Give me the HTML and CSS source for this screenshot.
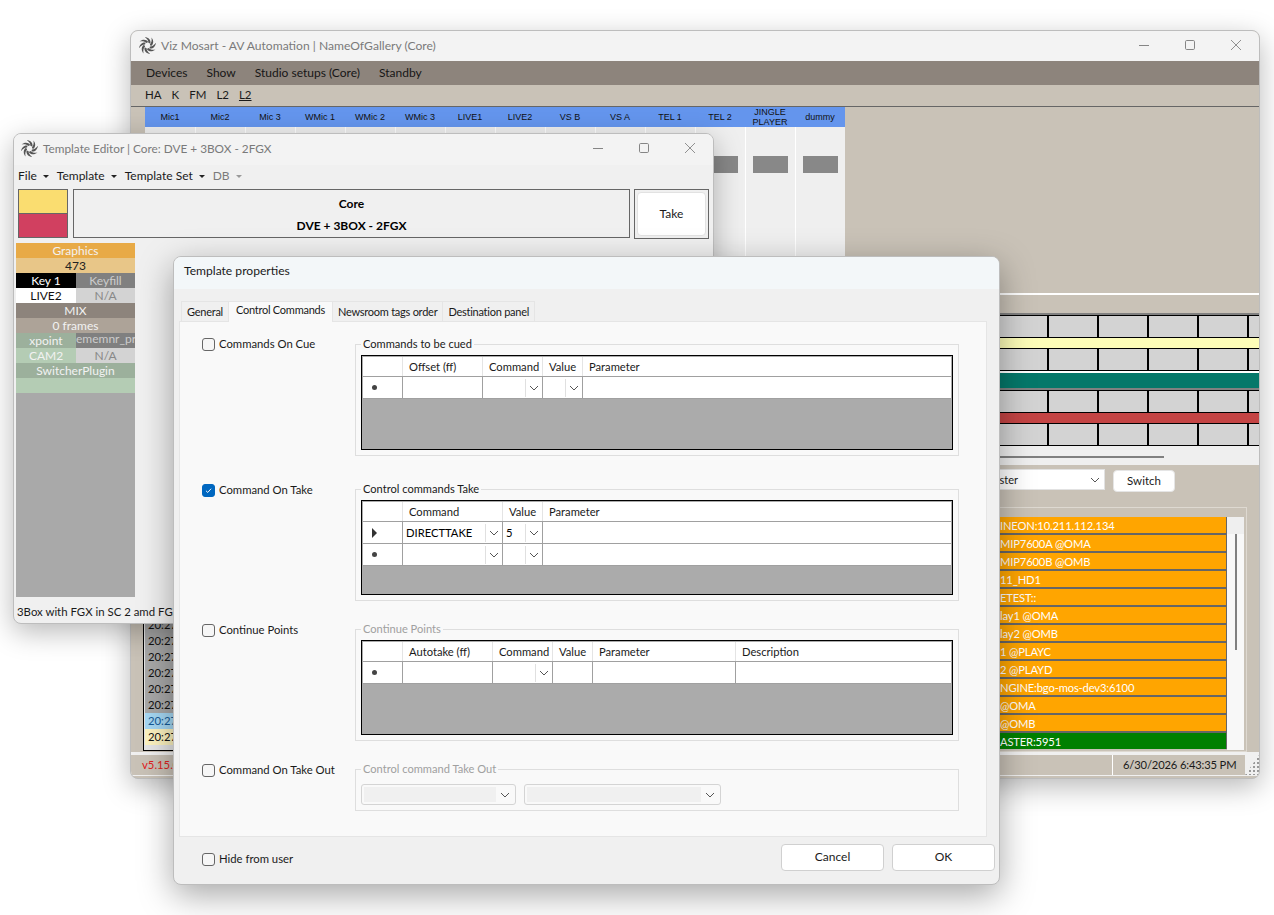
FILE: index.html
```html
<!DOCTYPE html>
<html lang="en">
<head>
  <meta charset="UTF-8">
  <title>Viz Mosart - Template properties</title>
  <link rel="stylesheet" href="styles.css">
</head>
<body>
  <svg class="defs" width="0" height="0">
    <symbol id="logo" viewBox="-8 -8 16 16">
      <path id="b1" d="M0.9 -2.3 C1 -4.3 -0.2 -6.2 -2.6 -7.9 C1 -7.6 3.4 -5 2.8 -1.8 Z"/>
      <use href="#b1" transform="rotate(45)"/>
      <use href="#b1" transform="rotate(90)"/>
      <use href="#b1" transform="rotate(135)"/>
      <use href="#b1" transform="rotate(180)"/>
      <use href="#b1" transform="rotate(225)"/>
      <use href="#b1" transform="rotate(270)"/>
      <use href="#b1" transform="rotate(315)"/>
    </symbol>
    <symbol id="chev" viewBox="0 0 10 6">
      <path d="M1 1 L5 5 L9 1" fill="none" stroke="currentColor" stroke-width="1"/>
    </symbol>
    <symbol id="tick" viewBox="0 0 13 13">
      <path d="M3.5 6.8 L5.6 8.8 L9.6 4.4" fill="none" stroke="#fff" stroke-width="1.1"/>
    </symbol>
    <symbol id="w-min" viewBox="0 0 10 10"><path d="M0 5.5 H10" stroke="currentColor" fill="none"/></symbol>
    <symbol id="w-max" viewBox="0 0 10 10"><rect x="0.5" y="0.5" width="9" height="9" rx="1.2" stroke="currentColor" fill="none"/></symbol>
    <symbol id="w-close" viewBox="0 0 10 10"><path d="M0 0 L10 10 M10 0 L0 10" stroke="currentColor" stroke-width="0.9" fill="none"/></symbol>
  </svg>

  <!-- main window -->
  <div class="window main-win">
    <div class="titlebar">
      <svg class="logo"><use href="#logo"/></svg>
      <span class="title">Viz Mosart - AV Automation | NameOfGallery (Core)</span>
      <div class="win-btns">
        <svg><use href="#w-min"/></svg>
        <svg><use href="#w-max"/></svg>
        <svg><use href="#w-close"/></svg>
      </div>
    </div>
    <div class="menubar">
      <span>Devices</span><span>Show</span><span>Studio setups (Core)</span><span>Standby</span>
    </div>
    <div class="toolbar">
      <span>HA</span><span>K</span><span>FM</span><span>L2</span><span class="under">L2</span>
    </div>
    <div class="work">
      <div class="mixer">
        <div class="chan"><div class="chan-head">Mic1</div><div class="fader"></div></div>
        <div class="chan"><div class="chan-head">Mic2</div><div class="fader"></div></div>
        <div class="chan"><div class="chan-head">Mic 3</div><div class="fader"></div></div>
        <div class="chan"><div class="chan-head">WMic 1</div><div class="fader"></div></div>
        <div class="chan"><div class="chan-head">WMic 2</div><div class="fader"></div></div>
        <div class="chan"><div class="chan-head">WMic 3</div><div class="fader"></div></div>
        <div class="chan"><div class="chan-head">LIVE1</div><div class="fader"></div></div>
        <div class="chan"><div class="chan-head">LIVE2</div><div class="fader"></div></div>
        <div class="chan"><div class="chan-head">VS B</div><div class="fader"></div></div>
        <div class="chan"><div class="chan-head">VS A</div><div class="fader"></div></div>
        <div class="chan"><div class="chan-head">TEL 1</div><div class="fader"></div></div>
        <div class="chan"><div class="chan-head">TEL 2</div><div class="fader"></div></div>
        <div class="chan"><div class="chan-head">JINGLE PLAYER</div><div class="fader"></div></div>
        <div class="chan"><div class="chan-head">dummy</div><div class="fader"></div></div>
      </div>
      <div class="white-rule"></div>
      <div class="lower">
        <div class="log-col">
          <div class="log">
            <div class="log-row">20:27</div>
            <div class="log-row">20:27</div>
            <div class="log-row">20:27</div>
            <div class="log-row">20:27</div>
            <div class="log-row">20:27</div>
            <div class="log-row">20:27</div>
            <div class="log-row log-blue">20:27</div>
            <div class="log-row log-yellow">20:27</div>
          </div>
        </div>
        <div class="right-col">
          <div class="strip-rule"></div>
          <div class="cells"></div>
          <div class="bar bar-yellow"></div>
          <div class="cells"></div>
          <div class="gap-white"></div>
          <div class="bar-teal"></div>
          <div class="strip-rule"></div>
          <div class="cells"></div>
          <div class="bar bar-red"></div>
          <div class="cells"></div>
          <div class="h-scroll"><div class="h-thumb"></div></div>
          <div class="switcher">
            <div class="select-box"><span>Master</span><svg class="chev"><use href="#chev"/></svg></div>
            <button class="btn switch-btn">Switch</button>
          </div>
          <div class="device-group">
            <div class="devices">
              <div class="dev">INEON:10.211.112.134</div>
              <div class="dev">MIP7600A @OMA</div>
              <div class="dev">MIP7600B @OMB</div>
              <div class="dev">11_HD1</div>
              <div class="dev">ETEST::</div>
              <div class="dev">lay1 @OMA</div>
              <div class="dev">lay2 @OMB</div>
              <div class="dev">1 @PLAYC</div>
              <div class="dev">2 @PLAYD</div>
              <div class="dev">NGINE:bgo-mos-dev3:6100</div>
              <div class="dev">@OMA</div>
              <div class="dev">@OMB</div>
              <div class="dev dev-ok">ASTER:5951</div>
            </div>
            <div class="v-scroll"><div class="v-thumb"></div></div>
          </div>
        </div>
      </div>
    </div>
    <div class="status">
      <div class="status-left">v5.15.0</div>
      <div class="status-date">6/30/2026 6:43:35 PM</div>
      <div class="grip"></div>
    </div>
  </div>

  <!-- template editor -->
  <div class="window editor-win">
    <div class="titlebar">
      <svg class="logo"><use href="#logo"/></svg>
      <span class="title">Template Editor | Core: DVE + 3BOX - 2FGX</span>
      <div class="win-btns">
        <svg><use href="#w-min"/></svg>
        <svg><use href="#w-max"/></svg>
        <svg><use href="#w-close"/></svg>
      </div>
    </div>
    <div class="ed-menu">
      <span>File<i class="caret"></i></span>
      <span>Template<i class="caret"></i></span>
      <span>Template Set<i class="caret"></i></span>
      <span class="off">DB<i class="caret"></i></span>
    </div>
    <div class="ed-top">
      <div class="swatches"><div class="sw-yellow"></div><div class="sw-red"></div></div>
      <div class="core-box"><div>Core</div><div>DVE + 3BOX - 2FGX</div></div>
      <div class="take-box"><button class="btn take-btn">Take</button></div>
    </div>
    <div class="ed-body">
      <div class="tpl-panel">
        <div class="tr t-gfx">Graphics</div>
        <div class="tr t-num">473</div>
        <div class="tr split"><div class="t-black">Key 1</div><div class="t-grey">Keyfill</div></div>
        <div class="tr split"><div class="t-white">LIVE2</div><div class="t-na">N/A</div></div>
        <div class="tr t-mix">MIX</div>
        <div class="tr t-frames">0 frames</div>
        <div class="tr split"><div class="t-green">xpoint</div><div class="t-grey t-clip">ememnr_pr</div></div>
        <div class="tr split"><div class="t-green2">CAM2</div><div class="t-na">N/A</div></div>
        <div class="tr t-green">SwitcherPlugin</div>
        <div class="tr t-green2"></div>
      </div>
    </div>
    <div class="ed-caption">3Box with FGX in SC 2 amd FGX</div>
  </div>

  <!-- template properties dialog -->
  <div class="window dialog">
    <div class="dlg-title">Template properties</div>
    <div class="dlg-body">
      <div class="tabs">
        <div class="tab">General</div>
        <div class="tab tab-on">Control Commands</div>
        <div class="tab">Newsroom tags order</div>
        <div class="tab">Destination panel</div>
      </div>
      <div class="tab-panel">

        <div class="section s1">
          <label class="check"><span class="box"></span>Commands On Cue</label>
          <fieldset class="group">
            <legend>Commands to be cued</legend>
            <div class="grid g-cue">
              <div class="row row-head">
                <div class="c"></div><div class="c">Offset (ff)</div><div class="c">Command</div><div class="c">Value</div><div class="c">Parameter</div>
              </div>
              <div class="row">
                <div class="c rh"><i class="dot"></i></div><div class="c"></div>
                <div class="c combo"><svg class="chev"><use href="#chev"/></svg></div>
                <div class="c combo"><svg class="chev"><use href="#chev"/></svg></div>
                <div class="c"></div>
              </div>
            </div>
          </fieldset>
        </div>

        <div class="section s2">
          <label class="check"><span class="box box-on"><svg><use href="#tick"/></svg></span>Command On Take</label>
          <fieldset class="group">
            <legend>Control commands Take</legend>
            <div class="grid g-take">
              <div class="row row-head">
                <div class="c"></div><div class="c">Command</div><div class="c">Value</div><div class="c">Parameter</div>
              </div>
              <div class="row">
                <div class="c rh"><i class="arrow"></i></div>
                <div class="c combo"><span>DIRECTTAKE</span><svg class="chev"><use href="#chev"/></svg></div>
                <div class="c combo"><span>5</span><svg class="chev"><use href="#chev"/></svg></div>
                <div class="c"></div>
              </div>
              <div class="row">
                <div class="c rh"><i class="dot"></i></div>
                <div class="c combo"><svg class="chev"><use href="#chev"/></svg></div>
                <div class="c combo"><svg class="chev"><use href="#chev"/></svg></div>
                <div class="c"></div>
              </div>
            </div>
          </fieldset>
        </div>

        <div class="section s3">
          <label class="check"><span class="box"></span>Continue Points</label>
          <fieldset class="group group-off">
            <legend>Continue Points</legend>
            <div class="grid g-cont">
              <div class="row row-head">
                <div class="c"></div><div class="c">Autotake (ff)</div><div class="c">Command</div><div class="c">Value</div><div class="c">Parameter</div><div class="c">Description</div>
              </div>
              <div class="row">
                <div class="c rh"><i class="dot"></i></div><div class="c"></div>
                <div class="c combo"><svg class="chev"><use href="#chev"/></svg></div>
                <div class="c"></div><div class="c"></div><div class="c"></div>
              </div>
            </div>
          </fieldset>
        </div>

        <div class="section s4">
          <label class="check"><span class="box"></span>Command On Take Out</label>
          <fieldset class="group group-off group-out">
            <legend>Control command Take Out</legend>
            <div class="out-row">
              <div class="out-select out-a"><span></span><svg class="chev"><use href="#chev"/></svg></div>
              <div class="out-select out-b"><span></span><svg class="chev"><use href="#chev"/></svg></div>
            </div>
          </fieldset>
        </div>
      </div>
      <div class="dlg-foot">
        <label class="check"><span class="box"></span>Hide from user</label>
        <div class="foot-btns">
          <button class="btn foot-btn">Cancel</button>
          <button class="btn foot-btn">OK</button>
        </div>
      </div>
    </div>
  </div>
</body>
</html>
```

FILE: styles.css
```css
* {
  box-sizing: border-box;
}

html, body {
  margin: 0;
  padding: 0;
  height: 915px;
  overflow: hidden;
}

body {
  background-color: #fff;
  font-family: Lato, Roboto, sans-serif;
  font-size: 12px;
  color: #1a1a1a;
  position: relative;
}

.defs {
  position: absolute;
}

.window {
  position: absolute;
  display: flex;
  flex-direction: column;
  border: 1px solid #bdbdbd;
  border-radius: 8px;
  overflow: hidden;
  background-color: #f0f0f0;
  box-shadow: 0 8px 28px rgba(0, 0, 0, 0.28);
}

.main-win {
  left: 130px;
  top: 30px;
  width: 1130px;
  height: 749px;
  background-color: #c9c2b7;
}

.editor-win {
  left: 13px;
  top: 133px;
  width: 701px;
  height: 491px;
}

.dialog {
  left: 173px;
  top: 256px;
  width: 827px;
  height: 629px;
  box-shadow: 0 10px 34px rgba(0, 0, 0, 0.35);
}

/* title bars */
.titlebar {
  flex: none;
  height: 30px;
  display: flex;
  align-items: center;
  padding: 0 0 2px 8px;
  background-color: #f3f3f3;
}

.editor-win .titlebar {
  height: 31px;
  padding: 0 0 3px 7px;
}

.logo {
  width: 17px;
  height: 17px;
  fill: #555;
  margin-right: 5px;
}

.title {
  color: #7a7a7a;
  font-size: 12.1px;
}

.editor-win .title {
  font-size: 11.8px;
}

.win-btns {
  margin-left: auto;
  display: flex;
  align-items: center;
  gap: 36px;
  padding-right: 18px;
  color: #858585;
}

.win-btns svg {
  width: 10px;
  height: 10px;
}

/* main window */
.menubar {
  flex: none;
  height: 24px;
  display: flex;
  align-items: center;
  gap: 19px;
  padding: 0 0 2px 15px;
  background-color: #8d847c;
  color: #161616;
}

.toolbar {
  flex: none;
  height: 21px;
  display: flex;
  align-items: center;
  gap: 10px;
  padding: 0 0 3px 14px;
  font-size: 11.5px;
}

.under {
  text-decoration: underline;
}

.work {
  flex: none;
  height: 646px;
  border-top: 1px solid #666;
}

.mixer {
  height: 186px;
  margin-left: 14px;
  width: 700px;
  display: flex;
}

.chan {
  width: 50px;
  background-color: #efefef;
}

.chan + .chan {
  border-left: 1px solid #fff;
}

.chan + .chan .chan-head {
  margin-left: -1px;
}

.chan-head {
  height: 20px;
  display: flex;
  align-items: center;
  justify-content: center;
  text-align: center;
  padding: 0 6px;
  background-color: #6495ed;
  font-family: "Liberation Sans", Arial, sans-serif;
  font-size: 9px;
  line-height: 10px;
  color: #111;
}

.fader {
  height: 17px;
  margin: 29px 7px 0;
  background-color: #888;
}

.white-rule {
  height: 2px;
  background-color: #fff;
}

.lower {
  display: flex;
  padding-top: 18px;
}

.log-col {
  width: 714px;
  padding-left: 12px;
}

.log {
  height: 439px;
  margin-top: -1px;
  display: flex;
  flex-direction: column;
  justify-content: flex-end;
  padding: 0 0 5px 1px;
  border: 1px solid #000;
  background-color: #e6e6e6;
}

.log-row {
  height: 16px;
  line-height: 16px;
  padding-left: 3px;
  background-color: #a8a8a8;
  color: #111;
  font-size: 11.3px;
}

.log-blue {
  background-color: #a6d8f4;
  color: #155a96;
}

.log-yellow {
  background-color: #fdf3c0;
}

.right-col {
  width: 414px;
}

.strip-rule {
  height: 2px;
  background-color: #808080;
}

.cells {
  height: 23px;
  border-top: 1px solid #000;
  border-bottom: 1px solid #000;
  background-image: linear-gradient(90deg, #d3d3d3 48px, #000 48px);
  background-size: 50px 100%;
  background-position: -46px 0;
}

.bar {
  height: 10px;
}

.bar-yellow {
  background-color: #fdfdb8;
}

.bar-red {
  background-color: #c44444;
}

.gap-white {
  height: 2px;
  background-color: #fff;
}

.bar-teal {
  height: 15px;
  background-color: #05786a;
}

.h-scroll {
  height: 19px;
  padding-top: 10px;
  background-color: #efefef;
}

.h-thumb {
  width: 319px;
  height: 2px;
  background-color: #808080;
}

.switcher {
  display: flex;
  align-items: flex-start;
  gap: 8px;
  margin-top: 4px;
  margin-left: 130px;
  height: 38px;
}

.select-box {
  width: 130px;
  height: 21px;
  display: flex;
  align-items: center;
  justify-content: space-between;
  padding: 0 4px 0 8px;
  background-color: #fff;
  border: 1px solid #e2e2e2;
  font-size: 11px;
}

.chev {
  width: 10px;
  height: 6px;
  flex: none;
  color: #555;
}

.btn {
  font-family: Lato, Roboto, sans-serif;
  font-size: 12px;
  color: #1a1a1a;
  background-color: #fff;
  border: 1px solid #d0d0d0;
  border-radius: 4px;
  padding: 0 0 2px;
}

.switch-btn {
  width: 62px;
  height: 22px;
  margin-top: 1px;
  border-color: #e5e5e5;
  font-size: 11.5px;
}

.device-group {
  margin: 0 12px 0 5px;
  height: 245px;
  padding: 9px 2px 1px 0;
  display: flex;
  border: 1px solid #ded9d1;
}

.devices {
  flex: 1;
  overflow: hidden;
}

.dev {
  height: 18px;
  line-height: 17px;
  padding-left: 149px;
  background-color: #ffa500;
  border-bottom: 2px solid #666;
  border-right: 1px solid #666;
  color: #fff;
  font-size: 11.2px;
  letter-spacing: -0.15px;
  white-space: nowrap;
}

.dev-ok {
  height: 16px;
  border-bottom: none;
  background-color: #008000;
}

.v-scroll {
  width: 17px;
  padding: 17px 0 0 8px;
  background: linear-gradient(#efefef 17px, #f8f8f8 17px);
}

.v-thumb {
  width: 2px;
  height: 116px;
  background-color: #808080;
}

.status {
  flex: none;
  height: 24px;
  padding: 3px 0 1px;
  display: flex;
  background-color: #f0f0f0;
}

.status-left {
  width: 982px;
  padding-left: 11px;
  line-height: 19px;
  color: #e02020;
  background-color: #c9c2b7;
  border-right: 1px solid #fff;
  font-size: 11.3px;
}

.status-date {
  width: 132px;
  padding-left: 10px;
  line-height: 19px;
  background-color: #c9c2b7;
  white-space: nowrap;
  font-size: 11.2px;
  letter-spacing: -0.15px;
}

.grip {
  flex: 1;
  background-image: radial-gradient(#999 1px, transparent 1px);
  background-size: 4px 4px;
  background-position: 3px 6px;
  clip-path: polygon(100% 0, 100% 100%, 0 100%);
}

/* template editor */
.ed-menu {
  flex: none;
  height: 23px;
  display: flex;
  align-items: center;
  gap: 8px;
  padding: 0 0 3px 4px;
}

.ed-menu .off {
  color: #7b7b7b;
}

.caret {
  display: inline-block;
  margin-left: 6px;
  vertical-align: 2px;
  border-left: 3px solid transparent;
  border-right: 3px solid transparent;
  border-top: 3px solid #222;
}

.off .caret {
  border-top-color: #999;
}

.ed-top {
  flex: none;
  height: 50px;
  display: flex;
  padding-left: 4px;
  margin-top: 1px;
}

.swatches {
  width: 50px;
  height: 49px;
  display: flex;
  flex-direction: column;
  gap: 1px;
  border: 1px solid #666;
  background-color: #666;
}

.sw-yellow {
  flex: 1;
  background-color: #fadd70;
}

.sw-red {
  flex: 1;
  background-color: #d14060;
}

.core-box {
  width: 557px;
  height: 49px;
  margin-left: 5px;
  display: flex;
  flex-direction: column;
  align-items: center;
  justify-content: space-around;
  padding: 2px 0 1px;
  border: 1px solid #666;
  font-size: 12px;
  font-weight: 700;
  color: #000;
}

.take-box {
  width: 75px;
  height: 50px;
  margin-left: 4px;
  padding: 2px;
  border: 1px solid #666;
}

.take-btn {
  width: 100%;
  height: 100%;
  border-color: #e2e2e2;
}

.ed-body {
  flex: none;
  padding: 4px 0 0 2px;
}

.tpl-panel {
  width: 119px;
  height: 354px;
  background-color: #a9a9a9;
}

.tr {
  height: 15px;
  line-height: 16px;
  text-align: center;
  color: #f2f2f2;
  overflow: hidden;
  white-space: nowrap;
}

.split {
  display: flex;
}

.split > div:first-child {
  width: 60px;
}

.split > div:last-child {
  flex: 1;
}

.t-gfx { background-color: #e8aa46; }
.t-num { background-color: #e8c688; color: #222; }
.t-black { background-color: #000; color: #fff; }
.t-grey { background-color: #808080; color: #ccc; }
.t-white { background-color: #fff; color: #111; }
.t-na { background-color: #d3d3d3; color: #888; }
.t-mix { background-color: #8d847c; }
.t-frames { background-color: #ada398; }
.t-green { background-color: #9cb09c; }
.t-green2 { background-color: #b4ccb4; }

.t-clip {
  line-height: 11px;
  overflow: hidden;
}

.ed-caption {
  margin-top: 8px;
  padding-left: 3px;
  white-space: nowrap;
  font-size: 11.4px;
}

/* template properties dialog */
.dlg-title {
  flex: none;
  height: 32px;
  line-height: 28px;
  padding-left: 10px;
  background-color: #f3f7f9;
  font-size: 12.1px;
}

.dlg-body {
  flex: 1;
  display: flex;
  flex-direction: column;
}

.tabs {
  flex: none;
  height: 21px;
  margin-top: 11px;
  padding-left: 8px;
  display: flex;
  align-items: flex-end;
  font-size: 11px;
  letter-spacing: -0.25px;
}

.tab {
  height: 20px;
  line-height: 19px;
  padding: 0 5px;
  background-color: #f0f0f0;
  border: 1px solid #e5e5e5;
  border-bottom: none;
  margin-left: -1px;
  white-space: nowrap;
}

.tab-on {
  height: 21px;
  line-height: 16px;
  padding: 0 7px;
  background-color: #f9f9f9;
  position: relative;
  top: 1px;
}

.tab-panel {
  flex: none;
  height: 516px;
  margin: 0 12px 0 5px;
  padding-left: 22px;
  background-color: #f9f9f9;
  border: 1px solid #e5e5e5;
}

.section {
  display: flex;
}

.s1 { margin-top: 14px; }
.s2 { margin-top: 25px; }
.s3 { margin-top: 20px; }
.s4 { margin-top: 20px; }

.check {
  display: flex;
  align-items: center;
  gap: 4px;
  width: 153px;
  height: 16px;
  margin-top: 0;
  font-size: 11.3px;
  white-space: nowrap;
}

.s1 .check {
  margin-top: -1px;
}

.box {
  width: 13px;
  height: 13px;
  flex: none;
  margin-top: 2px;
  border: 1px solid #666;
  border-radius: 3px;
  background-color: #f6f6f6;
}

.box-on {
  border-color: #0067c0;
  background-color: #0067c0;
}

.box-on svg {
  display: block;
  width: 11px;
  height: 11px;
}

.group {
  width: 604px;
  height: 120px;
  margin: 0;
  padding: 0 5px;
  border: 1px solid #dedede;
  min-width: 0;
}

.group legend {
  padding: 0 2px;
  margin-left: 0;
  line-height: 16px;
  font-size: 11.1px;
}

.group-off legend {
  color: #a0a0a0;
}

.group-out {
  height: 50px;
}

.grid {
  height: 95px;
  margin-top: 3px;
  padding: 1px;
  border: 1px solid #000;
  background-color: #ababab;
  font-size: 11.2px;
}

.row {
  display: grid;
  height: 22px;
  background-color: #fff;
  border-bottom: 1px solid #a0a0a0;
}

.row-head {
  height: 20px;
}

.g-cue .row { grid-template-columns: 40px 80px 60px 40px 1fr; }
.g-take .row { grid-template-columns: 40px 100px 40px 1fr; }
.g-cont .row { grid-template-columns: 40px 90px 60px 40px 143px 1fr; }

.c {
  display: flex;
  align-items: center;
  border-right: 1px solid #a0a0a0;
  overflow: hidden;
}

.c:last-child {
  border-right: none;
}

.row-head .c {
  padding-left: 6px;
  border-right-color: #e4e4e4;
  line-height: 18px;
}

.rh {
  justify-content: center;
  padding-right: 17px;
}

.dot {
  width: 5px;
  height: 5px;
  border-radius: 50%;
  background-color: #444;
}

.arrow {
  border-top: 5px solid transparent;
  border-bottom: 5px solid transparent;
  border-left: 5px solid #333;
}

.combo {
  padding: 1px 0 1px 3px;
  justify-content: flex-end;
}

.combo span {
  margin-right: auto;
  color: #000;
}

.combo .chev {
  padding: 0 3px;
  box-sizing: content-box;
  width: 10px;
  height: 18px;
  border-left: 1px solid #e0e0e0;
}

.out-row {
  display: flex;
  gap: 8px;
  margin-top: 7px;
}

.out-select {
  height: 21px;
  display: flex;
  align-items: center;
  justify-content: space-between;
  padding: 2px 5px 2px 2px;
  border: 1px solid #d4d4d4;
  border-radius: 3px;
  color: #bbb;
}

.out-select span {
  height: 100%;
  background-color: #f0f0f0;
}

.out-a { width: 155px; }
.out-a span { width: 132px; }
.out-b { width: 197px; }
.out-b span { width: 174px; }

.dlg-foot {
  flex: 1;
  display: flex;
  align-items: flex-start;
  padding: 7px 4px 0 28px;
}

.dlg-foot .check {
  margin-top: 6px;
}

.foot-btns {
  margin-left: auto;
  display: flex;
  gap: 8px;
}

.foot-btn {
  width: 103px;
  height: 27px;
}
```
